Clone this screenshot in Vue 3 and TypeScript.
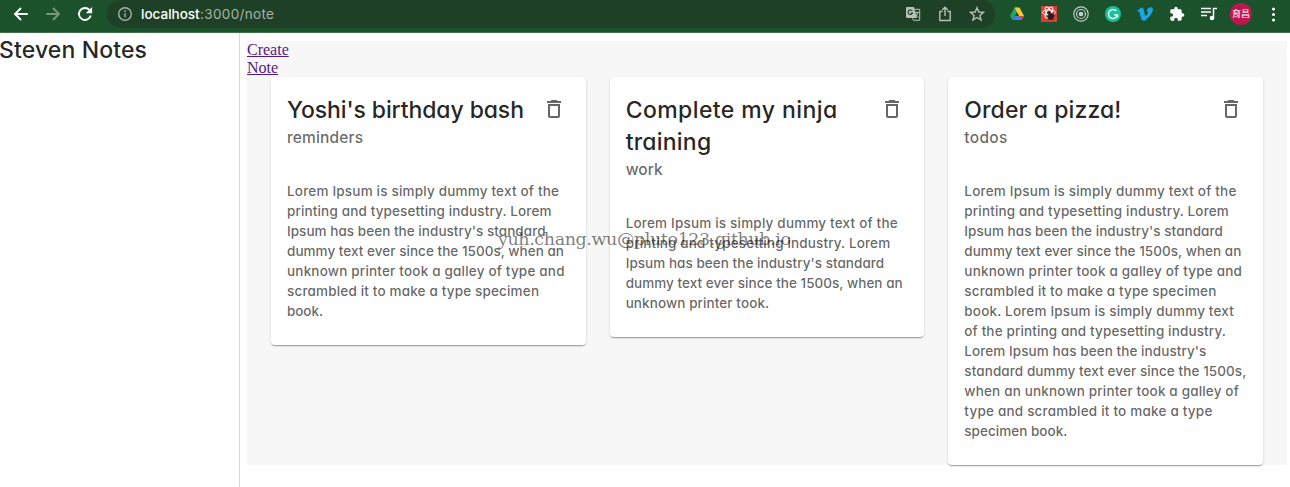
<script setup lang="ts">
import { onMounted, ref } from 'vue'

interface Line { text: string; width: number }
interface Note { title: Line[]; category: Line; body: Line[] }

const line = (text: string, width: number): Line => ({ text, width })

const intro: Line[] = [
  line('Lorem Ipsum is simply dummy text of the', 272),
  line('printing and typesetting industry. Lorem', 264.5),
  line("Ipsum has been the industry's standard", 258.5),
  line('dummy text ever since the 1500s, when an', 277),
]
const middle: Line[] = [
  line('unknown printer took a galley of type and', 277.5),
  line('scrambled it to make a type specimen', 252),
]

const notes: Note[] = [
  {
    title: [line("Yoshi's birthday bash", 237)],
    category: line('reminders', 76),
    body: [...intro, ...middle, line('book.', 36)],
  },
  {
    title: [line('Complete my ninja', 211.5), line('training', 85.5)],
    category: line('work', 37),
    body: [...intro, line('unknown printer took.', 143.5)],
  },
  {
    title: [line('Order a pizza!', 157)],
    category: line('todos', 43),
    body: [
      ...intro,
      ...middle,
      line('book. Lorem Ipsum is simply dummy text', 269.5),
      line('of the printing and typesetting industry.', 261.5),
      line("Lorem Ipsum has been the industry's", 242),
      line('standard dummy text ever since the 1500s,', 282),
      line('when an unknown printer took a galley of', 274.5),
      line('type and scrambled it to make a type', 248),
      line('specimen book.', 103),
    ],
  },
]

// Tracks each line of text out (or in) to its measured width.
const root = ref<HTMLElement | null>(null)
onMounted(() => {
  root.value?.querySelectorAll<HTMLElement>('[data-fit]').forEach((el) => {
    const count = (el.textContent ?? '').length
    const natural = el.getBoundingClientRect().width
    el.style.letterSpacing = `${(Number(el.dataset.fit) - natural) / Math.max(1, count - 1)}px`
  })
})
</script>

<template>
  <div ref="root" class="window">
    <header class="toolbar">
      <div class="nav">
        <svg class="ico" viewBox="0 0 24 24"><path d="M21 12H5M12 4L4 12l8 8" /></svg>
        <svg class="ico dim" viewBox="0 0 24 24"><path d="M3 12h16M12 4l8 8-8 8" /></svg>
        <svg class="ico" viewBox="0 0 24 24"><path d="M19.700 14a8 8 0 1 1-1.800-7.400L20 9" /><path class="solid" d="M21.500 2.500v8.500h-8.500z" /></svg>
      </div>
      <div class="address">
        <svg class="info" viewBox="0 0 16 16"><circle cx="8" cy="8" r="6.300" /><path d="M8 7.200v4M8 4.300v1.600" /></svg>
        <span class="url"><b data-fit="59">localhost</b><span data-fit="74">:3000/note</span></span>
        <div class="page-actions">
          <svg viewBox="0 0 16 16">
            <path d="M1.500 1h7.500l3 11H2.500q-1.500 0-1.500-1V2q0-1 .5-1z" fill="#b6c1b8" />
            <path d="M9.500 3.300h5.200v11H8.500l-1-2" fill="none" stroke="#b6c1b8" stroke-width="1" />
            <path d="M7.300 5A2.300 2.300 0 1 0 7.500 7H5.500" fill="none" stroke="#1e4027" stroke-width="1.100" />
            <path d="M9.500 6.500h4.500M11.700 5.500v1M13 6.500q-1 3-3 4.500M10.500 8l3 3.500" fill="none" stroke="#b6c1b8" stroke-width=".9" />
          </svg>
          <svg class="outline" viewBox="0 0 16 16"><path d="M5.500 5.500H2.800v9h10.400v-9h-2.700M8 10V1.500M5.200 4L8 1.300 10.800 4" /></svg>
          <svg class="outline" viewBox="0 0 16 16"><path d="M8 1.700l1.800 4.300 4.700.4-3.600 3 1.100 4.600-4-2.500-4 2.500 1.100-4.600-3.600-3 4.700-.4z" /></svg>
        </div>
      </div>
      <div class="extensions">
        <svg viewBox="0 0 16 16">
          <path d="M5.500 1.500h2.500v5L3.500 14 1 10z" fill="#22a565" />
          <path d="M5.500 1.500h5L15 10h-5z" fill="#fcc934" />
          <path d="M3.500 14L6 10h9l-2.500 4z" fill="#3f7ff0" />
          <path d="M10.500 10h4.500l-2.200 3.700z" fill="#ea4335" />
          <path d="M8 6.500l2 3.500H6z" fill="#1b522b" />
        </svg>
        <svg viewBox="0 0 16 16">
          <path d="M0 0h16v16H0z" fill="#e03c36" />
          <g fill="none" stroke="#fff" stroke-width="1"><ellipse cx="8" cy="6.500" rx="6.500" ry="2.500" /><ellipse cx="8" cy="6.500" rx="2.500" ry="6" transform="rotate(30 8 6.500)" /><ellipse cx="8" cy="6.500" rx="2.500" ry="6" transform="rotate(-30 8 6.500)" /></g>
          <ellipse cx="10" cy="10.500" rx="3" ry="3.600" fill="#222" transform="rotate(40 10 10.500)" /><circle cx="8" cy="7" r="1.800" fill="#222" /><path d="M6 9.500l7 4M13 7.500l-5 6" stroke="#222" stroke-width=".8" />
        </svg>
        <svg viewBox="0 0 16 16"><g fill="none" stroke="#c5cec7" stroke-width="1.200"><circle cx="8" cy="8" r="7.200" /><circle cx="8" cy="8" r="4.500" /></g><circle cx="8" cy="8" r="2.300" fill="#c5cec7" /></svg>
        <svg viewBox="0 0 16 16"><circle cx="8" cy="8" r="8" fill="#15c39a" /><path d="M11.300 5A4.500 4.500 0 1 0 12.400 8.800H9M12.500 8.500v3" fill="none" stroke="#fff" stroke-width="1.300" /></svg>
        <svg viewBox="0 0 16 16"><path d="M0 5L4 1.700Q6 .6 6.700 3.500L7.800 8.600Q8.600 11.500 10.500 7.800 12 5 9.500 5.600 10.500 1.200 14 1.200 17 1.500 15.300 6 13.500 10.500 8.500 14.200 5.500 16 4.200 12.500L2.300 6Q2 4.800 .8 5.900z" fill="#19a5e8" /></svg>
        <svg viewBox="0 0 24 24"><path d="M20.500 11H19V7c0-1.100-.9-2-2-2h-4V3.500a2.500 2.500 0 0 0-5 0V5H4c-1.100 0-2 .9-2 2v3.800h1.500a2.700 2.700 0 0 1 0 5.400H2V20c0 1.100.9 2 2 2h3.800v-1.500a2.700 2.700 0 0 1 5.400 0V22H17c1.100 0 2-.9 2-2v-4h1.500a2.500 2.500 0 0 0 0-5z" fill="#fff" /></svg>
        <svg viewBox="0 0 16 16"><path d="M0 2.500h10M0 6h10M0 9.500h6M12.500 12V2.500H16" fill="none" stroke="#fff" stroke-width="1.500" /><circle cx="11" cy="12" r="2.300" fill="#fff" /></svg>
        <span class="avatar">育昌</span>
        <svg viewBox="0 0 16 16"><g fill="#fff"><circle cx="8.500" cy="3" r="1.500" /><circle cx="8.500" cy="8.500" r="1.500" /><circle cx="8.500" cy="14" r="1.500" /></g></svg>
      </div>
    </header>

    <div class="page">
      <aside class="sidebar"><h1><span data-fit="148">Steven Notes</span></h1></aside>
      <main class="content">
        <a class="create" href="#">Create Note</a>
        <div class="grid">
          <article v-for="(note, i) in notes" :key="i" class="card">
            <div class="card-head">
              <div>
                <h2><span v-for="l in note.title" :key="l.text" class="row"><span :data-fit="l.width">{{ l.text }}</span></span></h2>
                <p class="category"><span :data-fit="note.category.width">{{ note.category.text }}</span></p>
              </div>
              <button class="delete" aria-label="Delete">
                <svg viewBox="0 0 24 24"><path d="M6 19c0 1.100.9 2 2 2h8c1.100 0 2-.9 2-2V7H6v12zM8 9h8v10H8V9zm7.500-5l-1-1h-5l-1 1H5v2h14V4z" /></svg>
              </button>
            </div>
            <p class="body"><span v-for="(l, n) in note.body" :key="n" class="row"><span :data-fit="l.width">{{ l.text }}</span></span></p>
          </article>
        </div>
      </main>
    </div>
    <div class="watermark"><span data-fit="293">yuh.chang.wu@pluto123.github.io</span></div>
  </div>
</template>

<style>
body { background: #fff; overflow: hidden; }
</style>

<style scoped>
* { box-sizing: border-box; }
h1, h2, p { margin: 0; font-weight: 450; }
svg { display: block; flex: none; }
.window { position: relative; height: 487px; display: flex; flex-direction: column; overflow: hidden; font-family: Inter, sans-serif; white-space: nowrap; }
.toolbar { height: 33px; flex: none; background: #1b522b; border-bottom: 1px solid #3f7049; display: flex; align-items: flex-start; }
.nav { width: 107px; height: 28px; padding-left: 12px; display: flex; align-items: center; gap: 14px; }
.ico { width: 18px; height: 18px; fill: none; stroke: #fff; stroke-width: 2.500; }
.ico .solid { fill: #fff; stroke: none; }
.dim { opacity: .4; }
.address { width: 888px; height: 28px; background: #1e4027; border-radius: 14px; display: flex; align-items: center; padding: 0 10px; }
.info { width: 16px; height: 16px; fill: none; stroke: #a5b3a8; stroke-width: 1.400; }
.url { margin-left: 8px; font: 13.500px Inter, sans-serif; color: #a5b3a8; display: flex; }
.url b { font-weight: 500; color: #fff; width: 59px; }
.page-actions { margin-left: auto; display: flex; gap: 16px; }
.page-actions svg { width: 16px; height: 16px; }
.outline { fill: none; stroke: #b6c1b8; stroke-width: 1.400; }
.extensions { flex: 1; height: 28px; padding-left: 14px; display: flex; align-items: center; gap: 16px; }
.extensions svg { width: 16px; height: 16px; }
.avatar { width: 22px; height: 22px; margin: 0 -3px; border-radius: 50%; background: #c2154f; color: #fff; font: 9px/22px "Noto Sans CJK TC", sans-serif; text-align: center; }
.page { flex: 1; display: flex; font-feature-settings: "cv11" 1; }
.sidebar { width: 240px; border-right: 1px solid #d8d8d8; }
h1 { padding-top: 1px; margin-left: -1px; font-size: 23px; line-height: 32px; color: rgba(0, 0, 0, .87); }
.content { margin: 8px 0 0 7px; width: 1040px; height: 424px; background: #f7f7f7; }
.create { display: block; width: 48px; height: 36px; font: 16px/18px "Liberation Serif", serif; color: #551a8b; white-space: normal; text-decoration: underline; }
.grid { padding: 0 24px; display: grid; grid-template-columns: repeat(3, 1fr); gap: 24px; align-items: start; }
.card { background: #fff; border-radius: 4px; box-shadow: 0 2px 1px -1px rgba(0, 0, 0, .2), 0 1px 1px rgba(0, 0, 0, .14), 0 1px 3px rgba(0, 0, 0, .12); }
.card-head { padding: 17px 16px 15px; display: flex; justify-content: space-between; align-items: flex-start; }
h2 { font-size: 23px; line-height: 32px; color: rgba(0, 0, 0, .87); }
.row { display: block; }
.category { font-size: 15.500px; line-height: 24px; color: rgba(0, 0, 0, .6); }
.body { padding: 16px 16px 24px; font-size: 13.500px; line-height: 20px; color: rgba(0, 0, 0, .62); }
.delete { width: 48px; height: 48px; margin: -9px -8px -8px 0; padding: 12px; border: 0; background: none; }
.delete svg { width: 24px; height: 24px; fill: rgba(0, 0, 0, .6); }
.watermark { position: absolute; left: 498px; top: 228px; font: 17.500px/22px "DejaVu Serif", serif; color: rgba(0, 0, 0, .52); }
</style>
